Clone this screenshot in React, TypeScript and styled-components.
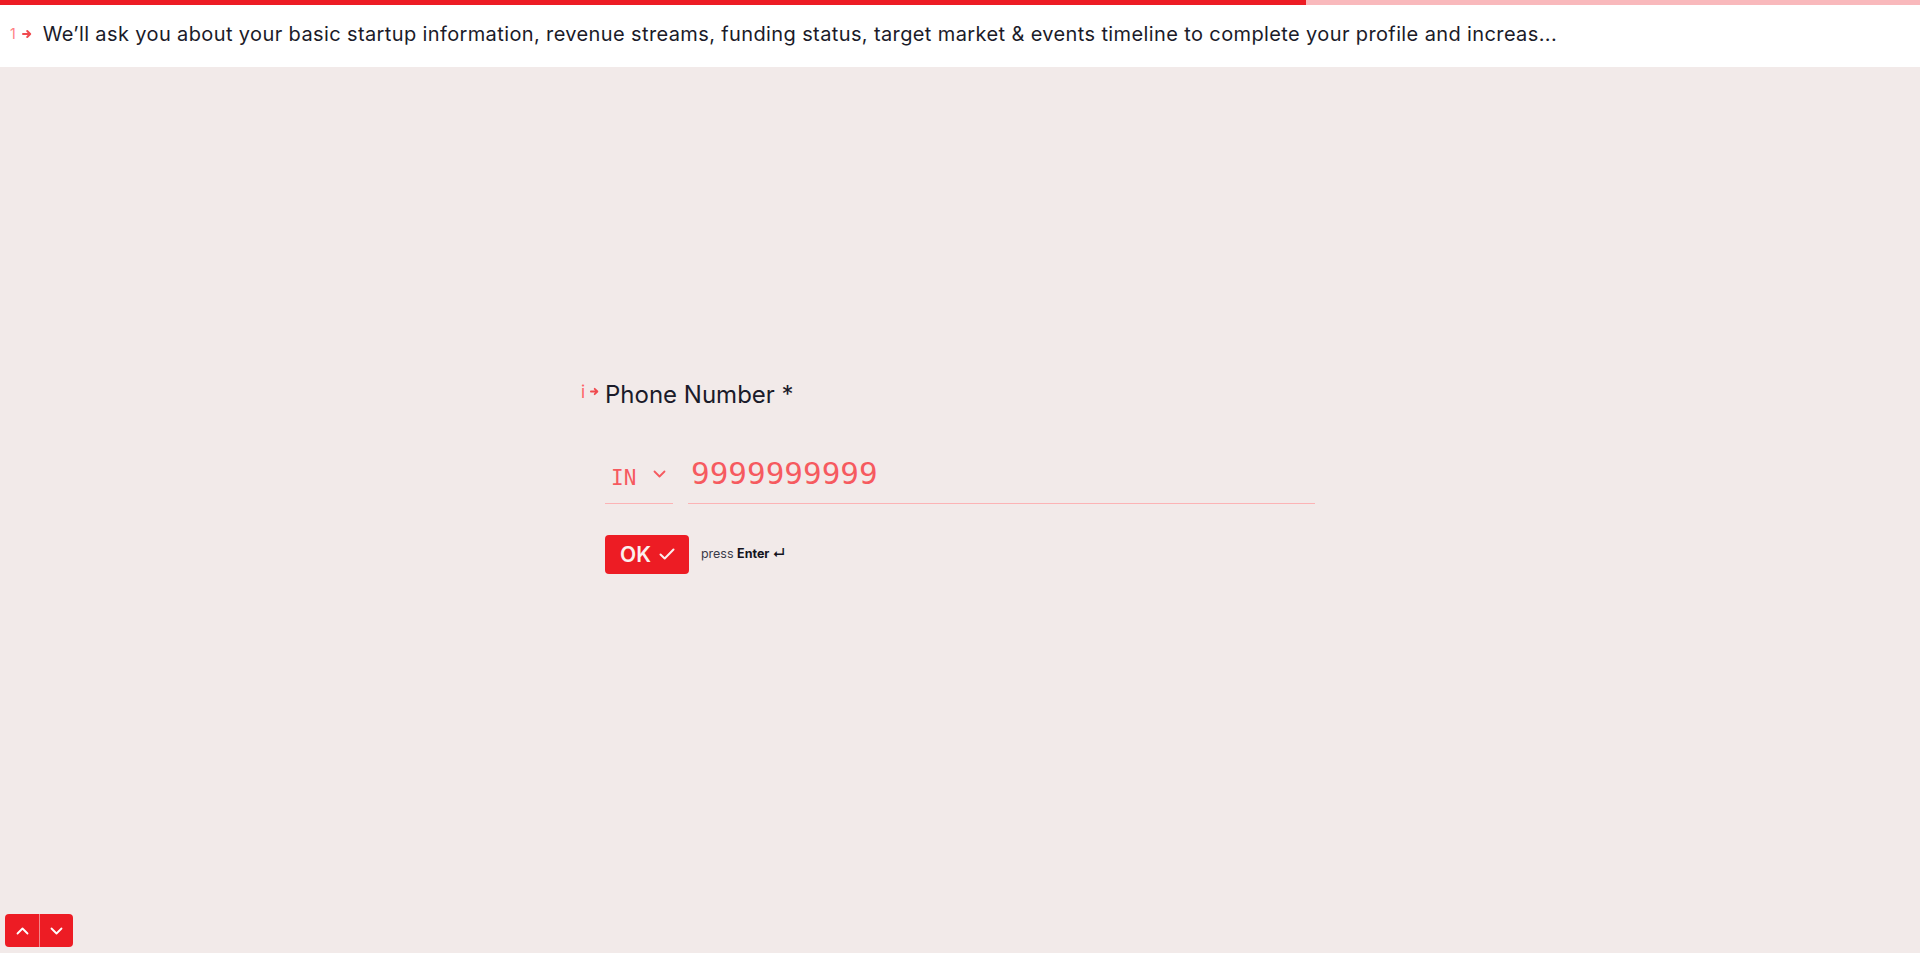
import React from "react";
import styled, { createGlobalStyle } from "styled-components";

const GlobalStyle = createGlobalStyle`
  * { box-sizing: border-box; }
  html, body { margin: 0; padding: 0; }
  body {
    background: #f2eae9;
    font-family: Inter, "Noto Sans", sans-serif;
    color: #1b1b29;
  }
`;

const Page = styled.div`
  min-height: 100vh;
  display: flex;
  flex-direction: column;
`;

const Header = styled.header`
  position: relative;
  height: 67px;
  background: #ffffff;
  display: flex;
  align-items: center;
  padding-left: 10px;
`;

const Progress = styled.div<{ $value: number }>`
  position: absolute;
  top: 0;
  left: 0;
  right: 0;
  height: 5px;
  background: #f9b9bc;

  &::before {
    content: "";
    display: block;
    height: 100%;
    width: ${(p) => p.$value}%;
    background: #ed1c24;
  }
`;

const StepNo = styled.span`
  display: inline-flex;
  align-items: center;
  gap: 6px;
  margin-right: 11px;
  color: #ff7f82;
  font-size: 14px;
`;

const Headline = styled.p`
  margin: 0;
  font-size: 20px;
  letter-spacing: 0.38px;
  white-space: nowrap;
`;

const Main = styled.main`
  flex: 1;
  display: flex;
  align-items: center;
  justify-content: center;
  padding-bottom: 68px;
`;

const Question = styled.section`
  width: 710px;
`;

const LabelRow = styled.div`
  display: flex;
  align-items: flex-start;
  margin-left: -25px;
`;

const Prefix = styled.span`
  width: 25px;
  display: inline-flex;
  align-items: center;
  gap: 5px;
  padding: 4px 0 0 1px;
  color: #ff6166;
  font-size: 17px;
  line-height: 18px;
`;

const Label = styled.label`
  font-size: 24px;
  line-height: 32px;
`;

const InputRow = styled.div`
  display: flex;
  align-items: flex-end;
  gap: 15px;
  margin-top: 44px;
`;

const CountrySelect = styled.button`
  width: 68px;
  display: flex;
  align-items: center;
  justify-content: space-between;
  padding: 0 7px 12px 6px;
  border: none;
  border-bottom: 1px solid #fcb3b5;
  background: transparent;
  color: #f65a5f;
  font-family: "DejaVu Sans Mono", monospace;
  font-size: 21px;
  line-height: 25px;
  cursor: pointer;

  svg {
    margin-bottom: 8px;
  }
`;

const PhoneInput = styled.input`
  flex: 1;
  min-width: 0;
  padding: 0 3px 11px;
  border: none;
  border-bottom: 1px solid #fcb3b5;
  background: transparent;
  color: #f65a5f;
  font-family: "DejaVu Sans Mono", monospace;
  font-size: 31px;
  line-height: 37px;
  outline: none;

  &::placeholder {
    color: #f65a5f;
    opacity: 1;
  }
`;

const ActionRow = styled.div`
  display: flex;
  align-items: center;
  gap: 12px;
  margin-top: 31px;
`;

const OkButton = styled.button`
  height: 39px;
  display: inline-flex;
  align-items: center;
  gap: 8px;
  padding: 0 14px 0 15px;
  border: none;
  border-radius: 4px;
  background: #ed1c24;
  color: #fbefee;
  font-family: Inter, sans-serif;
  font-size: 21px;
  font-weight: 600;
  cursor: pointer;
`;

const Hint = styled.span`
  margin-top: -2px;
  font-size: 12.5px;
  color: #3b3b4a;

  b {
    font-weight: 700;
    color: #15151f;
  }
`;

const NavGroup = styled.div`
  position: fixed;
  left: 5px;
  bottom: 6px;
  display: flex;
  border-radius: 4px;
  overflow: hidden;
`;

const NavButton = styled.button`
  width: 34px;
  height: 33px;
  display: flex;
  align-items: center;
  justify-content: center;
  padding: 0;
  border: none;
  background: #ed1c24;
  cursor: pointer;

  & + & {
    border-left: 1px solid #f4868a;
  }
`;

const Arrow = ({ size = 10 }: { size?: number }) => (
  <svg width={size} height={size} viewBox="0 0 10 10" fill="none">
    <path d="M1 5h7M5.2 2l3 3-3 3" stroke="#f04a4f" strokeWidth="2" strokeLinecap="round" strokeLinejoin="round" />
  </svg>
);

const Chevron = ({ up = false, color, w = 13 }: { up?: boolean; color: string; w?: number }) => (
  <svg width={w} height="8" viewBox="0 0 13 8" fill="none">
    <path
      d={up ? "M1.5 6.5L6.5 1.5l5 5" : "M1.5 1.5l5 5 5-5"}
      stroke={color}
      strokeWidth="1.8"
      strokeLinecap="round"
      strokeLinejoin="round"
    />
  </svg>
);

const Check = () => (
  <svg width="16" height="12" viewBox="0 0 16 12" fill="none">
    <path d="M1.5 6.5l4.2 4L14.5 1.5" stroke="#fbefee" strokeWidth="2" strokeLinecap="round" strokeLinejoin="round" />
  </svg>
);

const intro =
  "We’ll ask you about your basic startup information, revenue streams, funding status, target market & events timeline to complete your profile and increas...";

export default function App() {
  return (
    <Page>
      <GlobalStyle />
      <Header>
        <Progress $value={68} />
        <StepNo>
          1
          <Arrow />
        </StepNo>
        <Headline>{intro}</Headline>
      </Header>

      <Main>
        <Question>
          <LabelRow>
            <Prefix>
              i
              <Arrow size={9} />
            </Prefix>
            <Label htmlFor="phone">Phone Number *</Label>
          </LabelRow>

          <InputRow>
            <CountrySelect type="button">
              IN
              <Chevron color="#f65a5f" />
            </CountrySelect>
            <PhoneInput id="phone" type="tel" placeholder="9999999999" />
          </InputRow>

          <ActionRow>
            <OkButton type="button">
              OK
              <Check />
            </OkButton>
            <Hint>
              press <b>Enter ↵</b>
            </Hint>
          </ActionRow>
        </Question>
      </Main>

      <NavGroup>
        <NavButton type="button" aria-label="Previous">
          <Chevron up color="#ffffff" />
        </NavButton>
        <NavButton type="button" aria-label="Next">
          <Chevron color="#ffffff" />
        </NavButton>
      </NavGroup>
    </Page>
  );
}
